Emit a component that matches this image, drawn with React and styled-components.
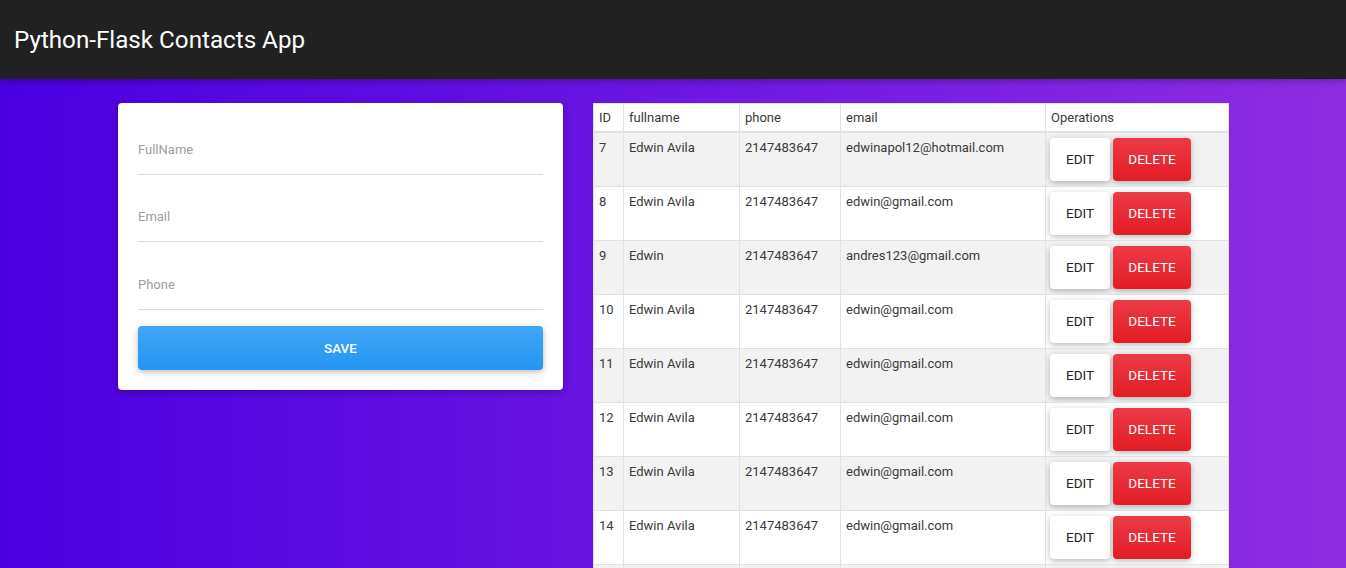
import React from "react";
import styled, { createGlobalStyle } from "styled-components";

const GlobalStyle = createGlobalStyle`
  * { box-sizing: border-box; }
  html, body { margin: 0; padding: 0; }
  body {
    font-family: Roboto, "Liberation Sans", Arial, sans-serif;
    background: linear-gradient(to right, #4a00e0, #8e2de2);
    min-height: 100vh;
    color: #212529;
  }
`;

const NavBar = styled.nav`
  height: 79px;
  background: #212121;
  display: flex;
  align-items: center;
  padding-left: 14px;
  box-shadow: 0 2px 5px rgba(0, 0, 0, 0.16), 0 2px 10px rgba(0, 0, 0, 0.12);
  position: relative;
  z-index: 2;
`;

const Brand = styled.a`
  color: #fff;
  font-size: 24.2px;
  font-weight: 400;
  text-decoration: none;
`;

const Main = styled.main`
  width: 1110px;
  margin: 0 auto;
  padding-top: 24px;
  display: grid;
  grid-template-columns: 445px 635px;
  column-gap: 30px;
  align-items: start;
`;

const Card = styled.div`
  background: #fff;
  border-radius: 4px;
  box-shadow: 0 2px 5px rgba(0, 0, 0, 0.16), 0 2px 10px rgba(0, 0, 0, 0.12);
  padding: 29px 20px 20px;
`;

const Form = styled.form`
  display: flex;
  flex-direction: column;
`;

const Field = styled.input`
  display: block;
  width: 100%;
  height: 43px;
  border: none;
  border-bottom: 1px solid #dcdcdc;
  outline: none;
  padding: 0 0 8px;
  font-family: Roboto, "Liberation Sans", Arial, sans-serif;
  font-size: 13px;
  color: #495057;
  background: transparent;
  margin-bottom: ${(p) => p.$gap}px;
  &::placeholder { color: #9e9e9e; }
`;

const SaveButton = styled.button`
  height: 44px;
  width: 100%;
  border: none;
  border-radius: 4px;
  background: linear-gradient(to bottom, #42a6f6, #2394f2);
  color: #fff;
  font-family: Roboto, "Liberation Sans", Arial, sans-serif;
  font-size: 13.5px;
  font-weight: 500;
  text-transform: uppercase;
  box-shadow: 0 2px 5px rgba(0, 0, 0, 0.16), 0 2px 10px rgba(0, 0, 0, 0.12);
  cursor: pointer;
`;

const Table = styled.table`
  width: 635px;
  border-collapse: collapse;
  background: #fff;
  font-size: 13px;
  line-height: 1.5;
  color: #3a3a3a;
  table-layout: fixed;
`;

const Th = styled.th`
  text-align: left;
  font-weight: 400;
  padding: 4px 5px 3px;
  border: 1px solid #dee2e6;
  border-bottom: 2px solid #dee2e6;
  width: ${(p) => p.$w}px;
  vertical-align: top;
`;

const Tr = styled.tr`
  background: ${(p) => (p.$striped ? "#f2f2f2" : "#fff")};
`;

const Td = styled.td`
  padding: 5px 4px 5px 5px;
  border: 1px solid #dee2e6;
  border-top: none;
  vertical-align: top;
  white-space: nowrap;
  overflow: hidden;
`;

const Ops = styled.div`
  display: flex;
  gap: 3px;
  margin-left: -1px;
`;

const ActionButton = styled.button`
  height: 43px;
  width: ${(p) => p.$w}px;
  padding: 0;
  border: none;
  border-radius: 4px;
  font-family: Roboto, "Liberation Sans", Arial, sans-serif;
  font-size: 13.5px;
  font-weight: 400;
  text-transform: uppercase;
  cursor: pointer;
  box-shadow: 0 2px 5px rgba(0, 0, 0, 0.16), 0 2px 10px rgba(0, 0, 0, 0.12);
  background: ${(p) =>
    p.$danger ? "linear-gradient(to bottom, #ec3b47, #e31c24)" : "#fff"};
  color: ${(p) => (p.$danger ? "#fff" : "#212529")};
`;

const contacts = [
  { id: 7, name: "Edwin Avila", phone: "2147483647", email: "edwinapol12@hotmail.com" },
  { id: 8, name: "Edwin Avila", phone: "2147483647", email: "edwin@gmail.com" },
  { id: 9, name: "Edwin", phone: "2147483647", email: "andres123@gmail.com" },
  { id: 10, name: "Edwin Avila", phone: "2147483647", email: "edwin@gmail.com" },
  { id: 11, name: "Edwin Avila", phone: "2147483647", email: "edwin@gmail.com" },
  { id: 12, name: "Edwin Avila", phone: "2147483647", email: "edwin@gmail.com" },
  { id: 13, name: "Edwin Avila", phone: "2147483647", email: "edwin@gmail.com" },
  { id: 14, name: "Edwin Avila", phone: "2147483647", email: "edwin@gmail.com" },
  { id: 15, name: "Edwin Avila", phone: "2147483647", email: "edwin@gmail.com" },
];

export default function App() {
  return (
    <>
      <GlobalStyle />
      <NavBar>
        <Brand href="#">Python-Flask Contacts App</Brand>
      </NavBar>
      <Main>
        <Card>
          <Form onSubmit={(e) => e.preventDefault()}>
            <Field type="text" placeholder="FullName" $gap={24} />
            <Field type="text" placeholder="Email" $gap={25} />
            <Field type="text" placeholder="Phone" $gap={16} />
            <SaveButton type="submit">Save</SaveButton>
          </Form>
        </Card>
        <Table>
          <thead>
            <tr>
              <Th $w={30}>ID</Th>
              <Th $w={116}>fullname</Th>
              <Th $w={101}>phone</Th>
              <Th $w={205}>email</Th>
              <Th $w={183}>Operations</Th>
            </tr>
          </thead>
          <tbody>
            {contacts.map((c, i) => (
              <Tr key={c.id} $striped={i % 2 === 0}>
                <Td>{c.id}</Td>
                <Td>{c.name}</Td>
                <Td>{c.phone}</Td>
                <Td>{c.email}</Td>
                <Td>
                  <Ops>
                    <ActionButton $w={60}>Edit</ActionButton>
                    <ActionButton $w={78} $danger>Delete</ActionButton>
                  </Ops>
                </Td>
              </Tr>
            ))}
          </tbody>
        </Table>
      </Main>
    </>
  );
}
